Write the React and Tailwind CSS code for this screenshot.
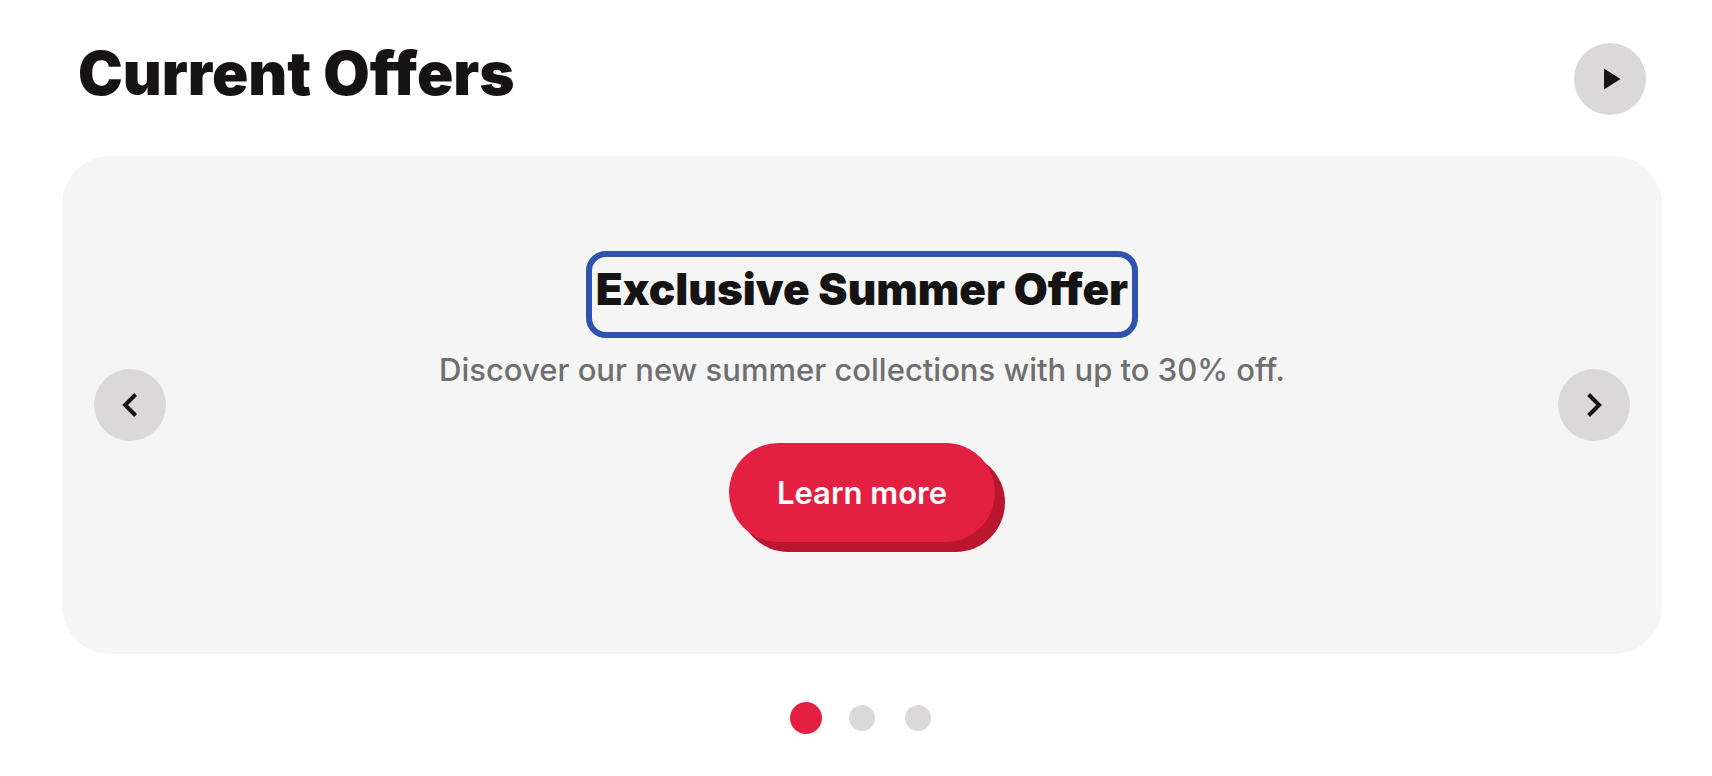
import React, { useEffect, useState } from 'react';

const offers = [
  {
    title: 'Exclusive Summer Offer',
    text: 'Discover our new summer collections with up to 30% off.',
  },
  {
    title: 'Members Only Deals',
    text: 'Sign in to see the prices reserved for our members.',
  },
  {
    title: 'Free Shipping Week',
    text: 'Order before Sunday and get free delivery.',
  },
];

function RoundButton({ label, onClick, children }) {
  return (
    <button
      type="button"
      aria-label={label}
      onClick={onClick}
      className="flex size-18 shrink-0 cursor-pointer items-center justify-center rounded-full bg-[#dad8d9] text-[#151314]"
    >
      {children}
    </button>
  );
}

function Chevron({ d }) {
  return (
    <svg
      viewBox="0 0 32 32"
      className="size-8"
      fill="none"
      stroke="currentColor"
      strokeWidth="4"
      aria-hidden="true"
    >
      <path d={d} />
    </svg>
  );
}

export default function App() {
  const [current, setCurrent] = useState(0);
  const [playing, setPlaying] = useState(false);

  const handlePrev = () => setCurrent(prev => (prev + offers.length - 1) % offers.length);
  const handleNext = () => setCurrent(prev => (prev + 1) % offers.length);

  // Autoplay
  useEffect(() => {
    if (!playing) return;
    const timer = setInterval(handleNext, 5000);
    return () => clearInterval(timer);
  }, [playing]);

  const offer = offers[current];

  return (
    <section className="bg-white pt-[43px] pr-[50px] pb-10 pl-[62px] font-['Inter',sans-serif] text-[#151314]">
      {/* Header */}
      <div className="flex items-center justify-between px-4">
        <h2 className="pb-3 text-[60px] leading-[60px] font-black">Current Offers</h2>
        <RoundButton
          label={playing ? 'Pause slides' : 'Play slides'}
          onClick={() => setPlaying(!playing)}
        >
          <svg viewBox="0 0 32 32" className="size-8" fill="currentColor" aria-hidden="true">
            {playing ? (
              <path d="M9 6h5v20H9zM18 6h5v20h-5z" />
            ) : (
              <path d="M10 5.500v21L26.500 16z" />
            )}
          </svg>
        </RoundButton>
      </div>

      {/* Slide */}
      <div className="mt-[41px] flex items-center justify-between rounded-[48px] bg-[#f5f5f5] px-8">
        <RoundButton label="Previous slide" onClick={handlePrev}>
          <Chevron d="M21.600 5.500 11.100 16l10.500 10.500" />
        </RoundButton>

        <div className="flex flex-col items-center pt-[95px] pb-28 text-center">
          <h3
            tabIndex={-1}
            className="rounded-[20px] border-6 border-[#3053af] px-1 pb-[11px] text-[44px] leading-[64px] font-black"
          >
            {offer.title}
          </h3>
          <p className="mt-2 text-[31px] leading-[48px] font-medium text-[#6f6f6f]">{offer.text}</p>
          <a
            href="#"
            className="mt-[49px] flex h-[99px] items-center rounded-[50px] bg-[#e42042] px-12 text-[31px] leading-[48px] font-semibold text-white shadow-[10px_10px_0_#bb1630]"
          >
            Learn more
          </a>
        </div>

        <RoundButton label="Next slide" onClick={handleNext}>
          <Chevron d="M10.600 5.500 21.100 16 10.600 26.500" />
        </RoundButton>
      </div>

      {/* Pagination */}
      <div className="mt-12 flex justify-center gap-6">
        {offers.map((item, index) => (
          <button
            key={item.title}
            type="button"
            aria-label={`Go to slide ${index + 1}`}
            aria-current={index === current}
            onClick={() => setCurrent(index)}
            className="flex size-8 cursor-pointer items-center justify-center"
          >
            <span
              className={
                index === current
                  ? 'size-8 rounded-full bg-[#e42042]'
                  : 'size-[26px] rounded-full bg-[#dad8d9]'
              }
            />
          </button>
        ))}
      </div>
    </section>
  );
}
